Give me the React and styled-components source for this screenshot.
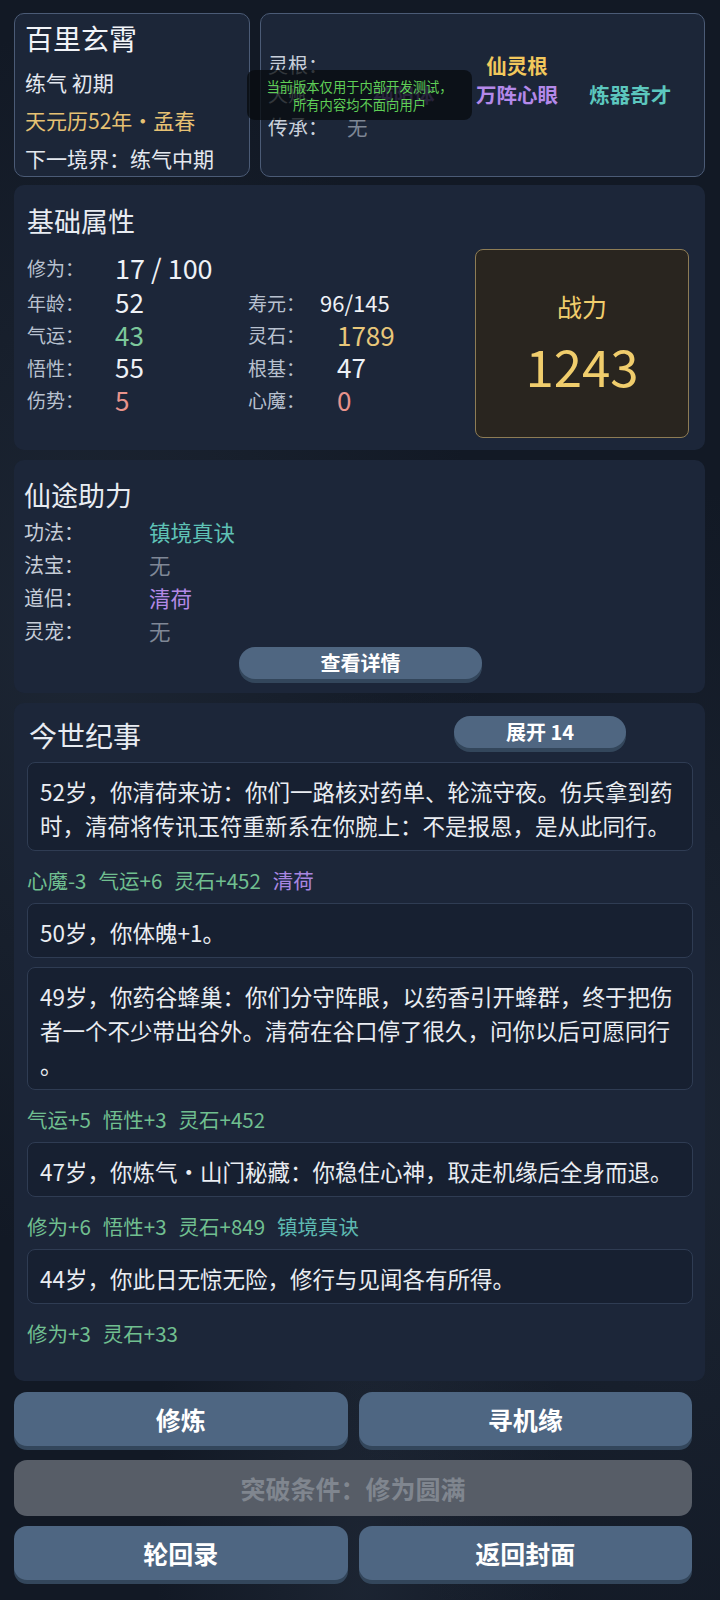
import React from 'react'
import styled, { createGlobalStyle } from 'styled-components'

const GlobalStyle = createGlobalStyle`
    html, body {
        margin: 0;
        padding: 0;
        background: #121925;
    }
    * { box-sizing: border-box; }
`

const Page = styled.div`
    position: relative;
    width: 720px;
    min-height: 1600px;
    padding: 13px 15px 0 14px;
    font-family: "Noto Sans CJK SC", "Noto Sans", sans-serif;
    color: #e6ebf2;
    background:
        radial-gradient(ellipse at 10% 40%, rgba(60, 75, 95, 0.25), transparent 45%),
        radial-gradient(ellipse at 95% 70%, rgba(60, 75, 95, 0.22), transparent 40%),
        radial-gradient(ellipse at 50% 98%, rgba(50, 62, 80, 0.3), transparent 40%),
        #121925;
`

const TopRow = styled.div`
    display: grid;
    grid-template-columns: 236px 1fr;
    gap: 10px;
    height: 164px;
`

const Card = styled.div`
    background: #1c2638;
    border: 1px solid #4b5b76;
    border-radius: 10px;
`

const IdentityCard = styled(Card)`
    display: flex;
    flex-direction: column;
    gap: 3px;
    padding: 5px 10px 0 10px;
    overflow: hidden;
`

const Name = styled.div`
    font-size: 28px;
    line-height: 38px;
    color: #f2f4f8;
    margin-bottom: 5px;
`

const InfoLine = styled.div`
    font-size: 21px;
    line-height: 35px;
    color: ${p => p.color || '#e4e8ef'};
    white-space: nowrap;
`

const GiftCard = styled(Card)`
    display: grid;
    grid-template-columns: 79px 340px;
    grid-template-rows: 29px 29px 38px;
    align-items: center;
    padding: 36px 16px 0 7px;
`

const GiftLabel = styled.div`
    font-size: 20px;
    line-height: 30px;
    color: #c9d0db;
`

const GiftValues = styled.div`
    display: grid;
    grid-template-columns: repeat(3, 1fr);
    align-items: center;
`

const Gift = styled.div`
    font-size: 20.5px;
    line-height: 30px;
    font-weight: ${p => p.plain ? 400 : 700};
    text-align: ${p => p.left ? 'left' : 'center'};
    color: ${p => p.color};
    grid-column: ${p => p.span ? '1 / -1' : 'auto'};
`

const Panel = styled.section`
    background: #1c2639;
    border-radius: 10px;
    margin-top: ${p => p.gap || 10}px;
`

const PanelTitle = styled.h2`
    margin: 0;
    font-weight: 400;
    font-size: 27px;
    line-height: 32px;
    color: #e8ecf2;
`

const StatsPanel = styled(Panel)`
    padding: 20px 16px 12px 13px;
`

const StatsBody = styled.div`
    display: flex;
    align-items: flex-start;
    margin-top: 11px;
`

const StatsGrid = styled.div`
    flex: 1;
    display: grid;
    grid-template-columns: 88px 133px 89px 1fr;
    grid-template-rows: 38px repeat(4, 32.5px);
    align-items: center;
`

const StatLabel = styled.div`
    font-size: 19px;
    color: #b8c1cf;
    white-space: nowrap;
`

const StatValue = styled.div`
    font-size: ${p => p.size || 26}px;
    line-height: 1;
    color: ${p => p.color || '#eef1f6'};
    margin-left: ${p => p.shift || 0}px;
    grid-column: ${p => p.wide ? 'span 3' : 'auto'};
    white-space: nowrap;
`

const PowerBox = styled.div`
    width: 214px;
    height: 189px;
    margin-top: 1px;
    background: #29251f;
    border: 1.5px solid #8d7c55;
    border-radius: 8px;
    display: flex;
    flex-direction: column;
    align-items: center;
    justify-content: center;
    color: #f0cd6c;
`

const PowerLabel = styled.div`
    font-size: 25px;
    line-height: 30px;
    margin-bottom: 16px;
`

const PowerValue = styled.div`
    font-size: 51px;
    line-height: 56px;
    margin-bottom: 4px;
`

const AidPanel = styled(Panel)`
    padding: 19px 13px 14px 10px;
`

const AidList = styled.div`
    margin-top: 4px;
    display: grid;
    grid-template-columns: 125px 1fr;
    grid-auto-rows: 33px;
    align-items: center;
`

const AidLabel = styled.div`
    font-size: 20px;
    color: #c6cdd8;
`

const AidValue = styled.div`
    font-size: 21.5px;
    color: ${p => p.color || '#7f8796'};
`

const PillButton = styled.button`
    display: block;
    height: 32px;
    border: none;
    border-radius: 16px;
    background: #4f6681;
    box-shadow: 0 4px 0 #33465b;
    color: #ffffff;
    font-family: inherit;
    font-weight: 700;
    font-size: 20px;
    line-height: 32px;
    padding: 0;
`

const DetailButton = styled(PillButton)`
    width: 243px;
    margin-left: 215px;
`

const LogPanel = styled(Panel)`
    padding: 13px 12px 34px 13px;
`

const LogHeader = styled.div`
    display: flex;
    align-items: flex-start;
    height: 36px;
    margin-bottom: 10px;
`

const LogTitle = styled(PanelTitle)`
    font-size: 28px;
    line-height: 38px;
    padding-left: 2px;
`

const ExpandButton = styled(PillButton)`
    width: 172px;
    margin-left: auto;
    margin-right: 67px;
`

const LogList = styled.div`
    display: flex;
    flex-direction: column;
    gap: 9px;
`

const Entry = styled.div`
    background: #172031;
    border: 1px solid #2f3c53;
    border-radius: 8px;
    padding: 11px 12px 8px 12px;
    font-size: 22.5px;
    line-height: 34px;
    color: #eaedf2;
    line-break: anywhere;
`

const Effects = styled.div`
    display: flex;
    gap: 12px;
    margin-top: 15px;
    font-size: 20.5px;
    line-height: 28px;
`

const Effect = styled.span`
    color: ${p => p.color || '#70bf90'};
`

const Actions = styled.div`
    margin-top: 11px;
    width: 673px;
    display: grid;
    grid-template-columns: 1fr 1fr;
    column-gap: 11px;
    row-gap: 10px;
    padding-bottom: 16px;
`

const ActionButton = styled.button`
    height: ${p => p.disabled ? 56 : 54}px;
    margin-bottom: ${p => p.disabled ? 0 : 4}px;
    border: none;
    border-radius: 13px;
    background: ${p => p.disabled ? '#575d67' : '#4e6682'};
    box-shadow: ${p => p.disabled ? 'none' : '0 4px 0 #33465b'};
    color: ${p => p.disabled ? '#80868f' : '#ffffff'};
    font-family: inherit;
    font-weight: 700;
    font-size: 25px;
    grid-column: ${p => p.disabled ? '1 / -1' : 'auto'};
    width: ${p => p.disabled ? '678px' : 'auto'};
    padding: 0;
`

const DevNotice = styled.div`
    position: absolute;
    left: 247px;
    top: 70px;
    width: 225px;
    height: 50px;
    border-radius: 8px;
    background: rgba(8, 11, 16, 0.78);
    color: #5fcf56;
    font-size: 13.3px;
    line-height: 18px;
    text-align: center;
    display: flex;
    flex-direction: column;
    justify-content: center;
    padding-top: 1px;
`

const stats = [
    { label: '年龄：', value: '52', label2: '寿元：', value2: '96/145', size2: 22, shift2: -17 },
    { label: '气运：', value: '43', color: '#7cc89b', label2: '灵石：', value2: '1789', color2: '#e8c77a' },
    { label: '悟性：', value: '55', label2: '根基：', value2: '47' },
    { label: '伤势：', value: '5', color: '#e8938c', label2: '心魔：', value2: '0', color2: '#e8938c' },
]

const aids = [
    { label: '功法：', value: '镇境真诀', color: '#5fc2b6' },
    { label: '法宝：', value: '无' },
    { label: '道侣：', value: '清荷', color: '#b48ae6' },
    { label: '灵宠：', value: '无' },
]

const PURPLE = '#a886e0'
const TEAL = '#5db9b1'

const events = [
    {
        text: '52岁，你清荷来访：你们一路核对药单、轮流守夜。伤兵拿到药时，清荷将传讯玉符重新系在你腕上：不是报恩，是从此同行。',
        effects: [['心魔-3'], ['气运+6'], ['灵石+452'], ['清荷', PURPLE]],
    },
    { text: '50岁，你体魄+1。' },
    {
        text: '49岁，你药谷蜂巢：你们分守阵眼，以药香引开蜂群，终于把伤者一个不少带出谷外。清荷在谷口停了很久，问你以后可愿同行。',
        effects: [['气运+5'], ['悟性+3'], ['灵石+452']],
    },
    {
        text: '47岁，你炼气・山门秘藏：你稳住心神，取走机缘后全身而退。',
        effects: [['修为+6'], ['悟性+3'], ['灵石+849'], ['镇境真诀', TEAL]],
    },
    {
        text: '44岁，你此日无惊无险，修行与见闻各有所得。',
        effects: [['修为+3'], ['灵石+33']],
    },
]

export default function App() {
    return (
        <Page>
            <GlobalStyle />
            <TopRow>
                <IdentityCard>
                    <Name>百里玄霄</Name>
                    <InfoLine>练气 初期</InfoLine>
                    <InfoLine color="#e6c173">天元历52年・孟春</InfoLine>
                    <InfoLine>下一境界：练气中期</InfoLine>
                </IdentityCard>
                <GiftCard>
                    <GiftLabel>灵根：</GiftLabel>
                    <GiftValues>
                        <Gift span color="#f2c85c">仙灵根</Gift>
                    </GiftValues>
                    <GiftLabel>天赋：</GiftLabel>
                    <GiftValues>
                        <Gift color="#9d78d6">纯阳体</Gift>
                        <Gift color="#b489ea">万阵心眼</Gift>
                        <Gift color="#5cc7be">炼器奇才</Gift>
                    </GiftValues>
                    <GiftLabel>传承：</GiftLabel>
                    <GiftValues>
                        <Gift left plain color="#7e8796">无</Gift>
                    </GiftValues>
                </GiftCard>
            </TopRow>

            <StatsPanel gap={8}>
                <PanelTitle>基础属性</PanelTitle>
                <StatsBody>
                    <StatsGrid>
                        <StatLabel>修为：</StatLabel>
                        <StatValue wide size={27}>17 / 100</StatValue>
                        {stats.map(s => (
                            <React.Fragment key={s.label}>
                                <StatLabel>{s.label}</StatLabel>
                                <StatValue color={s.color}>{s.value}</StatValue>
                                <StatLabel>{s.label2}</StatLabel>
                                <StatValue color={s.color2} size={s.size2} shift={s.shift2}>{s.value2}</StatValue>
                            </React.Fragment>
                        ))}
                    </StatsGrid>
                    <PowerBox>
                        <PowerLabel>战力</PowerLabel>
                        <PowerValue>1243</PowerValue>
                    </PowerBox>
                </StatsBody>
            </StatsPanel>

            <AidPanel>
                <PanelTitle>仙途助力</PanelTitle>
                <AidList>
                    {aids.map(a => (
                        <React.Fragment key={a.label}>
                            <AidLabel>{a.label}</AidLabel>
                            <AidValue color={a.color}>{a.value}</AidValue>
                        </React.Fragment>
                    ))}
                </AidList>
                <DetailButton>查看详情</DetailButton>
            </AidPanel>

            <LogPanel>
                <LogHeader>
                    <LogTitle>今世纪事</LogTitle>
                    <ExpandButton>展开 14</ExpandButton>
                </LogHeader>
                <LogList>
                    {events.map(ev => (
                        <div key={ev.text}>
                            <Entry>{ev.text}</Entry>
                            {ev.effects && (
                                <Effects>
                                    {ev.effects.map(([t, c]) => (
                                        <Effect key={t} color={c}>{t}</Effect>
                                    ))}
                                </Effects>
                            )}
                        </div>
                    ))}
                </LogList>
            </LogPanel>

            <Actions>
                <ActionButton>修炼</ActionButton>
                <ActionButton>寻机缘</ActionButton>
                <ActionButton disabled>突破条件：修为圆满</ActionButton>
                <ActionButton>轮回录</ActionButton>
                <ActionButton>返回封面</ActionButton>
            </Actions>

            <DevNotice>
                <div>当前版本仅用于内部开发测试，</div>
                <div>所有内容均不面向用户</div>
            </DevNotice>
        </Page>
    )
}
